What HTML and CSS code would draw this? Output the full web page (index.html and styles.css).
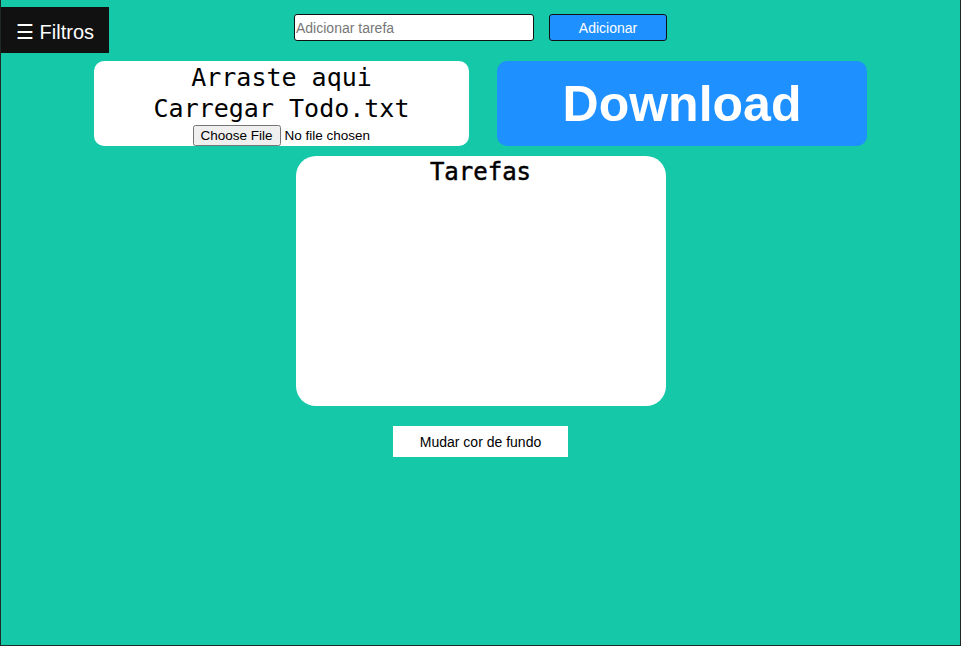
FILE: index.html
```html
<!DOCTYPE html>
<html lang="pt">
<head>
<meta charset="utf-8">
<title>Tarefas</title>
<link rel="stylesheet" href="styles.css">
</head>
<body>
<div class="page">
  <header class="topbar">
    <div class="left">
      <button class="filtros">☰ Filtros</button>
    </div>
    <div class="add">
      <input class="task-input" type="text" placeholder="Adicionar tarefa">
      <button class="add-btn">Adicionar</button>
    </div>
    <div class="right"></div>
  </header>
  <section class="tools">
    <div class="drop">
      <div class="drop-text">Arraste aqui<br>Carregar Todo.txt</div>
      <input class="file" type="file">
    </div>
    <div class="download">Download</div>
  </section>
  <section class="tasks">
    <h2 class="tasks-title">Tarefas</h2>
  </section>
  <div class="actions">
    <button class="bg-btn">Mudar cor de fundo</button>
  </div>
</div>
</body>
</html>
```
FILE: styles.css
```css
html, body {
  margin: 0;
  padding: 0;
}
body {
  background: #15c9a8;
  font-family: "Liberation Sans", Arial, sans-serif;
}
.page {
  box-sizing: border-box;
  height: 646px;
  border: 1px solid #1d2b28;
  border-top: none;
  display: flex;
  flex-direction: column;
}
.topbar {
  display: grid;
  grid-template-columns: 1fr auto 1fr;
  padding-top: 7px;
}
.filtros {
  box-sizing: border-box;
  width: 108px;
  height: 46px;
  background: #111;
  color: #fff;
  border: none;
  font-family: "Liberation Sans", Arial, sans-serif;
  font-size: 20px;
  padding: 3px 0 0;
  text-align: center;
}
.add {
  display: flex;
  gap: 15px;
  margin-top: 7px;
  align-items: flex-start;
}
.task-input {
  box-sizing: border-box;
  width: 240px;
  height: 27px;
  border: 1px solid #111;
  border-radius: 3px;
  padding: 0 1px;
  font-family: "Liberation Sans", Arial, sans-serif;
  font-size: 14px;
  background: #fff;
}
.task-input::placeholder {
  color: #777;
}
.add-btn {
  box-sizing: border-box;
  width: 118px;
  height: 27px;
  background: #1e90ff;
  color: #fff;
  border: 1px solid #111;
  border-radius: 3px;
  font-family: "Liberation Sans", Arial, sans-serif;
  font-size: 14px;
}
.tools {
  display: flex;
  justify-content: center;
  gap: 28px;
  margin-top: 8px;
}
.drop {
  width: 375px;
  height: 85px;
  background: #fff;
  border-radius: 10px;
  text-align: center;
  display: flex;
  flex-direction: column;
  align-items: center;
}
.drop-text {
  font-family: "DejaVu Sans Mono", "Liberation Mono", monospace;
  font-size: 25px;
  line-height: 31px;
  color: #000;
  margin-top: 1px;
}
.file {
  width: 178px;
  font-family: "Liberation Sans", Arial, sans-serif;
  font-size: 13.5px;
  margin-top: 1px;
}
.download {
  width: 370px;
  height: 85px;
  background: #1e90ff;
  border-radius: 10px;
  color: #fff;
  font-family: "Liberation Sans", Arial, sans-serif;
  font-weight: bold;
  font-size: 50px;
  display: flex;
  align-items: center;
  justify-content: center;
}
.tasks {
  align-self: center;
  width: 370px;
  height: 250px;
  margin-top: 10px;
  background: #fff;
  border-radius: 20px;
  text-align: center;
}
.tasks-title {
  margin: 0;
  font-family: "DejaVu Sans Mono", "Liberation Mono", monospace;
  font-size: 24px;
  line-height: 33px;
  font-weight: normal;
  -webkit-text-stroke: 0.5px #000;
}
.actions {
  display: flex;
  justify-content: center;
  margin-top: 20px;
}
.bg-btn {
  width: 175px;
  height: 31px;
  background: #fff;
  border: none;
  font-family: "Liberation Sans", Arial, sans-serif;
  font-size: 14px;
  color: #000;
}
```
